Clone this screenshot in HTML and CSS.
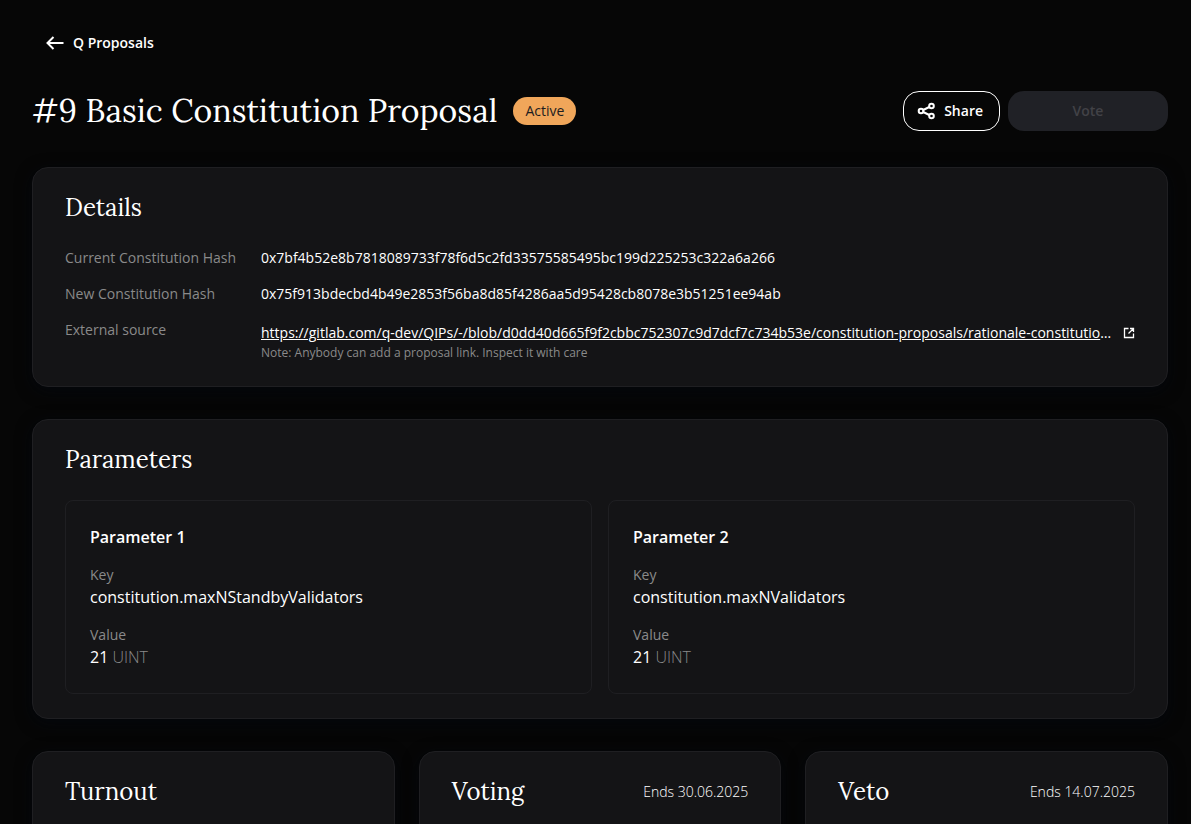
FILE: index.html
```
<!DOCTYPE html>
<html lang="en">
<head>
    <meta charset="UTF-8">
    <meta name="viewport" content="width=device-width, initial-scale=1.0">
    <title>#9 Basic Constitution Proposal</title>
    <link rel="stylesheet" href="styles.css">
</head>
<body>
    <main class="page">
        <a href="#" class="back-link">
            <svg class="back-icon" viewBox="0 0 20 20" aria-hidden="true">
                <path d="M18.500 10H2.500M8.500 4L2.500 10l6 6"/>
            </svg>
            <span>Q Proposals</span>
        </a>

        <header class="header">
            <div class="header-title">
                <h1>#9 Basic Constitution Proposal</h1>
                <span class="badge">Active</span>
            </div>
            <div class="header-actions">
                <button type="button" class="btn btn-outline">
                    <svg class="share-icon" viewBox="0 0 20 20" aria-hidden="true">
                        <circle cx="15.500" cy="5" r="2.300"/>
                        <circle cx="5" cy="10" r="2.300"/>
                        <circle cx="15.500" cy="15" r="2.300"/>
                        <path d="M7.200 9l6.100-3M7.200 11l6.100 3"/>
                    </svg>
                    <span>Share</span>
                </button>
                <button type="button" class="btn btn-vote" disabled>Vote</button>
            </div>
        </header>

        <section class="card">
            <h2>Details</h2>
            <dl class="details">
                <dt>Current Constitution Hash</dt>
                <dd>0x7bf4b52e8b7818089733f78f6d5c2fd33575585495bc199d225253c322a6a266</dd>
                <dt>New Constitution Hash</dt>
                <dd>0x75f913bdecbd4b49e2853f56ba8d85f4286aa5d95428cb8078e3b51251ee94ab</dd>
                <dt>External source</dt>
                <dd>
                    <div class="source">
                        <div class="source-text"><a href="#">https://gitlab.com/q-dev/QIPs/-/blob/d0dd40d665f9f2cbbc752307c9d7dcf7c734b53e/constitution-proposals/rationale-constitution-parameters.md</a></div>
                        <svg class="external-icon" viewBox="0 0 12 12" aria-hidden="true">
                            <path d="M5.500 1.500H1.500v9h9V6.500M7 1.500h3.500V5M10.500 1.500L5.500 6.500"/>
                        </svg>
                    </div>
                    <p class="note">Note: Anybody can add a proposal link. Inspect it with care</p>
                </dd>
            </dl>
        </section>

        <section class="card">
            <h2>Parameters</h2>
            <div class="parameters">
                <article class="parameter">
                    <h3>Parameter 1</h3>
                    <dl>
                        <dt>Key</dt>
                        <dd>constitution.maxNStandbyValidators</dd>
                        <dt>Value</dt>
                        <dd>21 <span class="type">UINT</span></dd>
                    </dl>
                </article>
                <article class="parameter">
                    <h3>Parameter 2</h3>
                    <dl>
                        <dt>Key</dt>
                        <dd>constitution.maxNValidators</dd>
                        <dt>Value</dt>
                        <dd>21 <span class="type">UINT</span></dd>
                    </dl>
                </article>
            </div>
        </section>

        <div class="stats">
            <section class="card stat">
                <h2>Turnout</h2>
            </section>
            <section class="card stat">
                <h2>Voting</h2>
                <span>Ends 30.06.2025</span>
            </section>
            <section class="card stat">
                <h2>Veto</h2>
                <span>Ends 14.07.2025</span>
            </section>
        </div>
    </main>
</body>
</html>
```
FILE: styles.css
```
:root {
    --bg-color: #060606;
    --card-bg: #141416;
    --border-color: #1f1f22;
    --text-color: #fff;
    --muted-color: #8a8a8a;
    --accent-color: #f0a65a;
}

* {
    margin: 0;
    padding: 0;
    box-sizing: border-box;
}

body {
    height: 100vh;
    overflow: hidden;
    font-family: "Open Sans", "Noto Sans", sans-serif;
    font-size: 14px;
    line-height: 20px;
    color: var(--text-color);
    background-color: var(--bg-color);
}

h1,
h2 {
    font-family: Lora, "Liberation Serif", serif;
    font-weight: 400;
}

h1 {
    font-size: 32px;
    line-height: 40px;
}

h2 {
    font-size: 24px;
    line-height: 32px;
}

h3 {
    font-size: 16px;
    line-height: 24px;
    font-weight: 600;
}

.page {
    padding: 31px 23px 32px 32px;
}

.back-link {
    display: flex;
    align-items: center;
    gap: 8px;
    width: fit-content;
    height: 24px;
    margin-left: 13px;
    color: var(--text-color);
    font-weight: 600;
    text-decoration: none;
}

.back-icon,
.share-icon {
    width: 20px;
    height: 20px;
    fill: none;
    stroke: currentColor;
    stroke-width: 2;
}

.header {
    display: flex;
    align-items: center;
    justify-content: space-between;
    margin: 36px 0;
}

.header-title {
    display: flex;
    align-items: center;
    gap: 16px;
}

.badge {
    padding: 4px 12px;
    border-radius: 14px;
    color: #1d1d1f;
    background-color: var(--accent-color);
}

.header-actions {
    display: flex;
    gap: 8px;
}

.btn {
    display: flex;
    align-items: center;
    justify-content: center;
    gap: 8px;
    height: 40px;
    border: 1px solid transparent;
    border-radius: 16px;
    font: inherit;
    font-weight: 600;
    color: var(--text-color);
    background-color: transparent;
    cursor: pointer;
}

.btn-outline {
    padding: 0 16px 0 12px;
    border-color: var(--text-color);
}

.btn-vote {
    width: 160px;
    color: #424246;
    background-color: #202126;
    cursor: default;
}

.card {
    margin-bottom: 32px;
    padding: 24px 32px;
    border: 1px solid var(--border-color);
    border-radius: 16px;
    background-color: var(--card-bg);
    box-shadow: 0 4px 16px rgba(4, 7, 14, 0.8);
}

.details {
    display: grid;
    grid-template-columns: 172px minmax(0, 1fr);
    gap: 16px 24px;
    margin-top: 24px;
}

dt {
    color: var(--muted-color);
}

.source {
    display: flex;
    align-items: center;
    gap: 8px;
    height: 24px;
    padding-top: 2px;
}

.source-text {
    flex: 1;
    overflow: hidden;
    white-space: nowrap;
    text-overflow: ellipsis;
}

.source-text a {
    color: var(--text-color);
}

.external-icon {
    flex: none;
    width: 12px;
    height: 12px;
    fill: none;
    stroke: currentColor;
    stroke-width: 1.3;
}

.note {
    font-size: 12px;
    line-height: 18px;
    color: var(--muted-color);
}

.parameters {
    display: grid;
    grid-template-columns: 1fr 1fr;
    gap: 16px;
    margin-top: 24px;
}

.parameter {
    padding: 24px;
    border: 1px solid var(--border-color);
    border-radius: 8px;
}

.parameter dt {
    margin-top: 16px;
}

.parameter dd {
    font-size: 16px;
    line-height: 24px;
}

.type {
    font-weight: 300;
    color: var(--muted-color);
}

.stats {
    display: grid;
    grid-template-columns: repeat(3, 1fr);
    gap: 24px;
}

.stat {
    display: flex;
    align-items: flex-start;
    justify-content: space-between;
    min-height: 240px;
}

.stat span {
    font-weight: 300;
    line-height: 32px;
}
```
